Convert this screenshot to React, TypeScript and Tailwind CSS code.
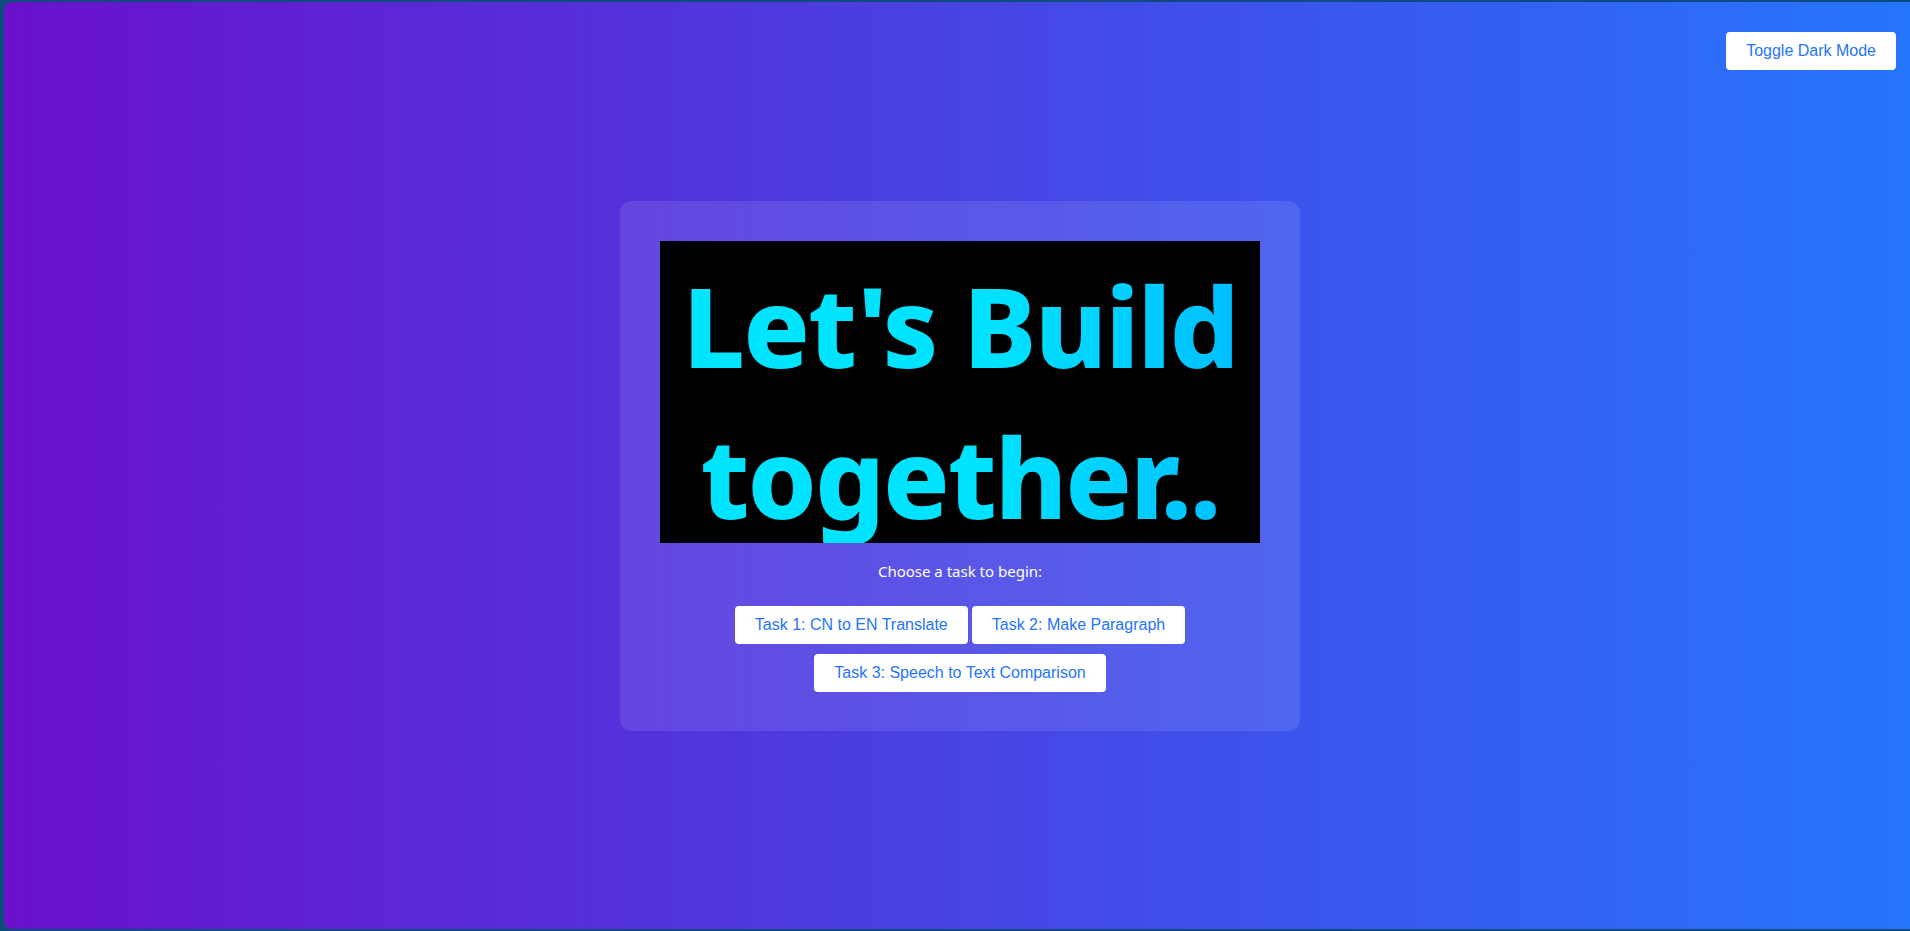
import React from "react";

const tasks = [
  "Task 1: CN to EN Translate",
  "Task 2: Make Paragraph",
  "Task 3: Speech to Text Comparison",
];

export default function App() {
  return (
    <div className="h-[931px] w-[1910px] overflow-hidden bg-[#0e4d7b] pt-[2px] pb-[2px] pl-[4px]">
      <div className="grid h-full w-full rounded-l-[8px] bg-[linear-gradient(to_right,#6a11cb,#2575fc)]">
        <div className="col-start-1 row-start-1 self-start justify-self-end pt-[30px] pr-[14px]">
          <button className="h-[38px] rounded-[4px] bg-white px-[20px] font-['Liberation_Sans',Arial,sans-serif] text-[16px] text-[#2575fc]">
            Toggle Dark Mode
          </button>
        </div>
        <div className="col-start-1 row-start-1 self-center justify-self-center pl-[6px]">
          <div className="flex w-[680px] flex-col items-center rounded-[12px] bg-white/10 px-[40px] pt-[40px] pb-[39px]">
            <div className="h-[302px] w-[600px] overflow-hidden bg-black pt-[9px] text-center">
              <div className="bg-[linear-gradient(90deg,#00e5ff_0%,#00e2ff_55%,#00bcff_100%)] bg-clip-text font-['Noto_Sans',sans-serif] text-[110px] leading-[151px] font-extrabold tracking-[-2px] text-transparent">
                <div>Let's Build</div>
                <div>together..</div>
              </div>
            </div>
            <p className="mt-[18px] font-['Noto_Sans',sans-serif] text-[15px] leading-[20px] text-white">
              Choose a task to begin:
            </p>
            <div className="mt-[25px] flex w-[600px] flex-wrap justify-center gap-x-[4px] gap-y-[10px]">
              {tasks.map((t) => (
                <button
                  key={t}
                  className="h-[38px] rounded-[4px] bg-white px-[20px] font-['Liberation_Sans',Arial,sans-serif] text-[16px] text-[#2575fc]"
                >
                  {t}
                </button>
              ))}
            </div>
          </div>
        </div>
      </div>
    </div>
  );
}
